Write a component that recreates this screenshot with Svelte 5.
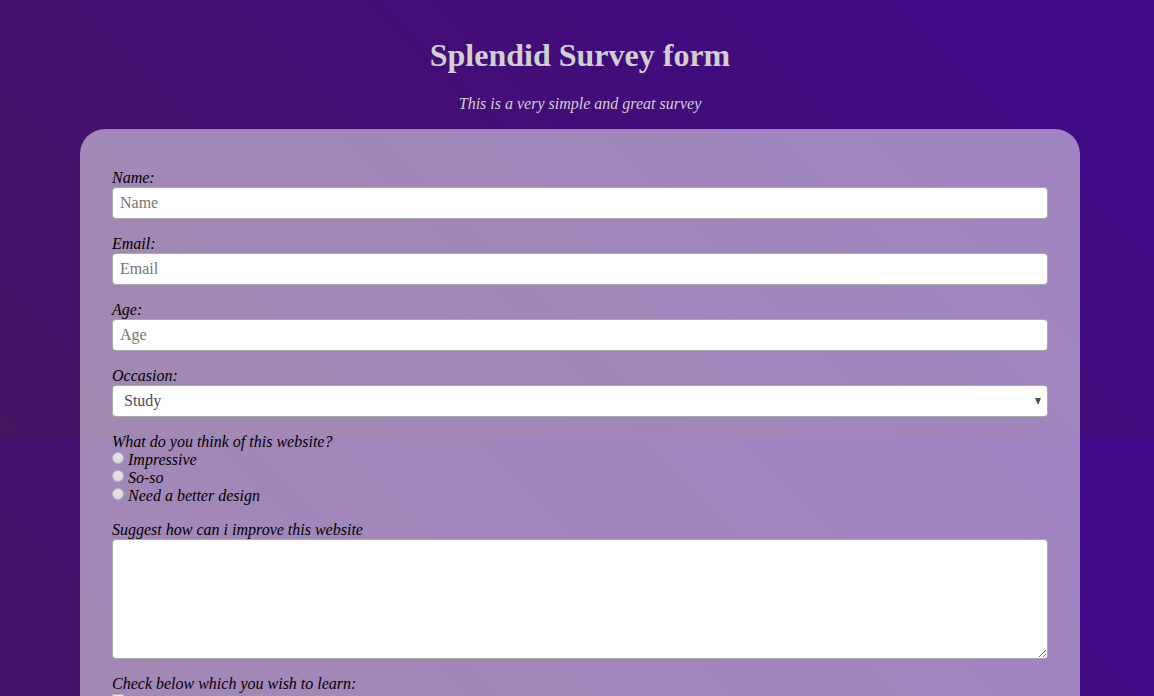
<script>
  const fields = [
    { id: 'name', label: 'Name:', placeholder: 'Name', type: 'text' },
    { id: 'email', label: 'Email:', placeholder: 'Email', type: 'email' },
    { id: 'age', label: 'Age:', placeholder: 'Age', type: 'number' }
  ];
  const opinions = ['Impressive', 'So-so', 'Need a better design'];
</script>

<main class="page">
  <header>
    <h1>Splendid Survey form</h1>
    <p>This is a very simple and great survey</p>
  </header>

  <form class="survey">
    {#each fields as field}
      <div class="group">
        <label for={field.id}>{field.label}</label>
        <input class="control" id={field.id} type={field.type} placeholder={field.placeholder} />
      </div>
    {/each}

    <div class="group">
      <label for="occasion">Occasion:</label>
      <div class="select-wrap">
        <select class="control" id="occasion">
          <option>Study</option>
        </select>
        <svg class="arrow" viewBox="0 0 6 6" aria-hidden="true"><path d="M0 0H6L3.5 6H2.5Z" /></svg>
      </div>
    </div>

    <fieldset class="group">
      <legend>What do you think of this website?</legend>
      {#each opinions as opinion}
        <label class="choice">
          <input type="radio" name="opinion" value={opinion} />
          <span>{opinion}</span>
        </label>
      {/each}
    </fieldset>

    <div class="group">
      <label for="suggestion">Suggest how can i improve this website</label>
      <textarea class="control" id="suggestion"></textarea>
    </div>

    <div class="group">
      <label for="learn">Check below which you wish to learn:</label>
      <div class="choice"><input id="learn" type="checkbox" /></div>
    </div>
  </form>
</main>

<style>
  :global(body) {
    background: linear-gradient(45deg, #451462, #40088a) 0 0 / 100% 437px repeat-y;
  }

  .page {
    box-sizing: border-box;
    max-width: 1016px;
    margin: 0 auto;
    padding: 16px 5px 0 11px;
    font: 16px/18px "Liberation Serif", "Times New Roman", serif;
  }

  header {
    color: #d0d0d0;
    text-align: center;
  }

  h1 {
    margin: 21px 0;
    font-size: 32px;
    line-height: 37px;
  }

  p {
    margin: 0 0 16px;
    font-style: italic;
  }

  .survey {
    padding: 40px 32px;
    border-radius: 25px;
    background: rgba(255, 255, 255, 0.5);
    color: #000;
    font-style: italic;
  }

  .group {
    display: flex;
    flex-direction: column;
    min-width: 0;
    margin: 0 0 16px;
    padding: 0;
    border: 0;
  }

  legend {
    padding: 0;
  }

  .control {
    box-sizing: border-box;
    width: 100%;
    height: 32px;
    margin: 0;
    padding: 0 7px;
    border: 1px solid #a9a9a9;
    border-radius: 4px;
    background: #fff;
    color: #495057;
    font: 16px/18px "Liberation Serif", "Times New Roman", serif;
  }

  .control::placeholder {
    color: #757575;
  }

  input[type='number'] {
    appearance: textfield;
  }

  .select-wrap {
    position: relative;
  }

  select.control {
    display: block;
    appearance: none;
    padding: 0 24px 0 11px;
  }

  .arrow {
    position: absolute;
    top: 13px;
    right: 7px;
    width: 6px;
    height: 6px;
    fill: #495057;
    pointer-events: none;
  }

  textarea.control {
    height: 120px;
    padding: 7px;
  }

  .choice {
    display: flex;
    gap: 4px;
    height: 18px;
  }

  .choice input {
    appearance: none;
    flex: none;
    width: 12px;
    height: 12px;
    margin: 1px 0 0;
    border: 1px solid #b4b4b4;
    background: linear-gradient(#e6e6e6, #dadada);
  }

  .choice input[type='radio'] {
    border-radius: 50%;
  }

  .choice input:checked {
    background: #555;
  }
</style>
